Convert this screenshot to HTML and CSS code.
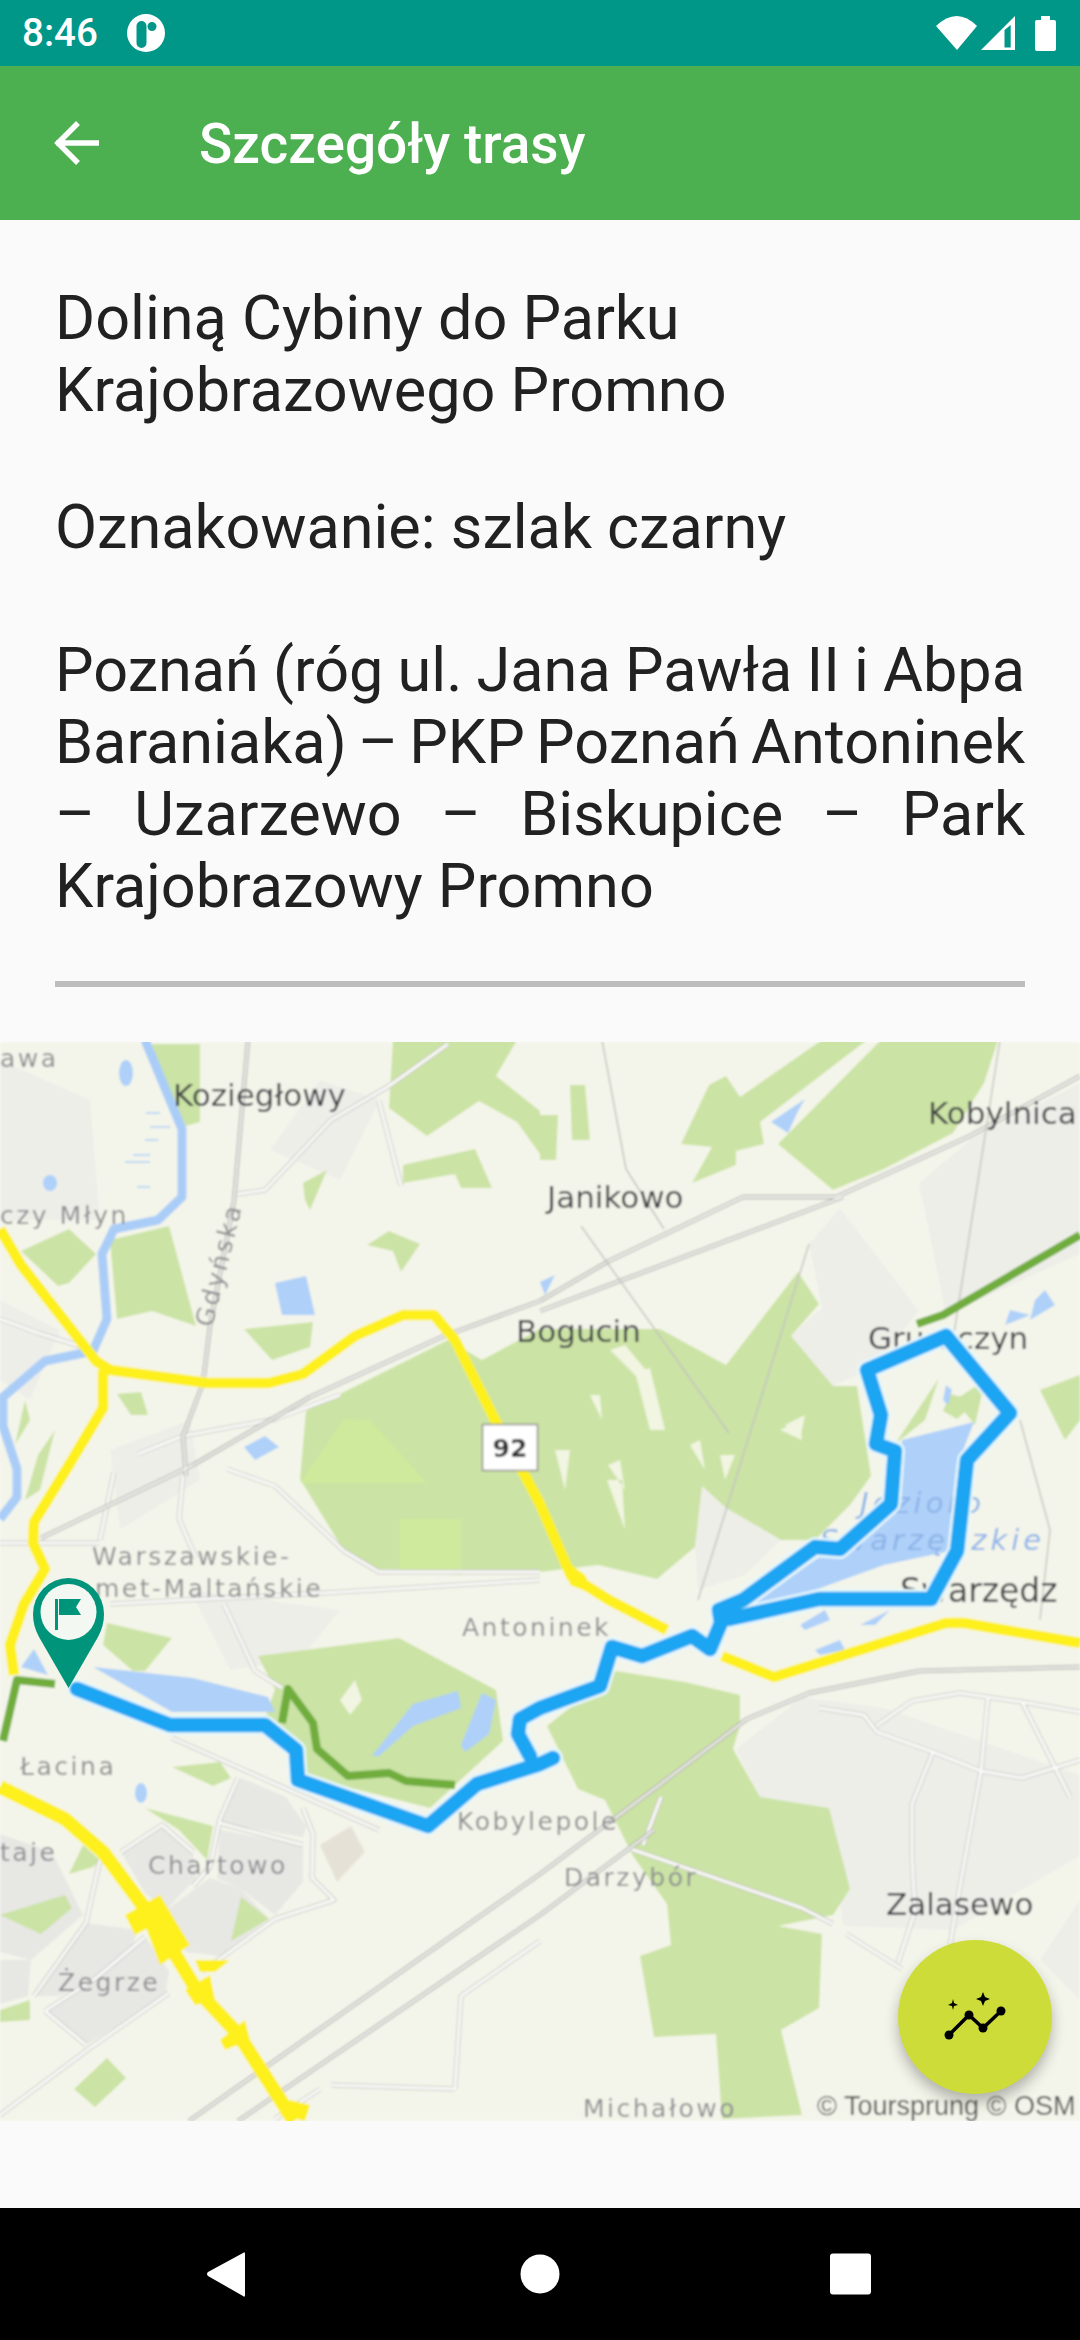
FILE: index.html
```html
<!DOCTYPE html>
<html lang="pl">
<head>
<meta charset="utf-8">
<title>Szczegóły trasy</title>
<link rel="stylesheet" href="styles.css">
</head>
<body>

<div class="statusbar">
	<span class="clock">8:46</span>
	<svg class="notif" viewBox="0 0 40 40" width="40" height="40">
		<path fill="#fff" fill-rule="evenodd" d="M20 1a19 19 0 1 0 0 38a19 19 0 1 0 0-38zM15.500 8a5 5 0 0 1 5 5v17a5 5 0 0 1-10 0v-17a5 5 0 0 1 5-5zM26 9a4.500 4.500 0 1 1 0 9a4.500 4.500 0 1 1 0-9z"/>
	</svg>
	<svg class="sysicons" viewBox="938 12 122 42" width="122" height="42">
		<path fill="#fff" d="M938 25Q959 5 979 25L959 49Z"/>
		<path fill="#fff" fill-rule="evenodd" d="M983 49L1017 15V49ZM1006.500 29V46.500H1012.700V24Z"/>
		<path fill="#fff" d="M1043 15H1052V19H1056Q1058 19 1058 21V48Q1058 50 1056 50H1039Q1037 50 1037 48V21Q1037 19 1039 19H1043Z"/>
	</svg>
</div>

<div class="appbar">
	<svg class="backarrow" viewBox="0 0 54 54" width="54" height="54">
		<path fill="none" stroke="#fff" stroke-width="5.500" d="M7 27H50M29 7L9 27L29 47"/>
	</svg>
	<div class="title">Szczegóły trasy</div>
</div>

<div class="content">
	<div class="info">
		<p class="route-name">Doliną Cybiny do Parku Krajobrazowego Promno</p>
		<p class="route-mark">Oznakowanie: szlak czarny</p>
		<p class="route-desc">
			<span class="jline tight">Poznań (róg ul. Jana Pawła II i Abpa</span>
			<span class="jline tight">Baraniaka) – PKP Poznań Antoninek</span>
			<span class="jline">– Uzarzewo – Biskupice – Park</span>
			<span class="lastline">Krajobrazowy Promno</span>
		</p>
		<div class="divider"></div>
	</div>

	<div class="map">
		<svg class="mapsvg" viewBox="0 1042 1080 1079" width="1080" height="1079">
			<defs>
				<filter id="soft" x="0" y="0" width="100%" height="100%"><feGaussianBlur stdDeviation="0.9"/></filter>
				<path id="minor" d="M224 1604L255 1671L282 1688M110 1604L324 1593L540 1580M238 1778L220 1819L210 1867L193 1886M303 1808L313 1834L312 1878L334 1900L275 1919L203 1971M169 1993L90 2048L0 2115M172 1738L379 1830M455 2089L461 1996L540 1941M331 2085L455 2089M320 2089L275 2119M220 1823L303 1845M121 1852L162 1825L193 1852M34 1996L86 1923L100 1860M145 1937L96 1978L45 2011M45 2011L86 2045M238 1194L265 1190L331 1120L389 1086L448 1044M379 1101L401 1186M0 1319L38 1333L83 1347M138 1454L183 1436L275 1419L340 1395M183 1476L179 1519L196 1558M227 1469L275 1486L344 1551L379 1572L540 1572M114 1472L100 1540M819 1708L864 1715L877 1732L933 1752L981 1771L1022 1778L1080 1760M876 1726L912 1701L960 1693L1022 1702L1080 1712M1022 1702L1070 1797M988 1697L981 1771L960 1886L950 1945M933 1752L912 1804L912 1856L915 1911L898 1963M631 1849L802 1908L833 1924M846 1934L902 1969M661 1797L643 1845M0 1543H100"/>
				<path id="rails" d="M41 1538L193 1465L310 1397L444 1336L540 1301L609 1261L743 1197L836 1197L970 1136L1080 1076M540 1311L843 1197M189 2121L540 1874L654 1789L747 1719L809 1693L919 1671L1080 1667M238 2121L540 1915L654 1830M248 1040L234 1201L210 1326L203 1383L183 1436L186 1476"/>
				<path id="track" d="M77 1689L170 1725H265L296 1750L298 1780L428 1826L477 1784L540 1764L553 1758M530 1756L518 1734L520 1719L540 1708L600 1686L612 1647L642 1656L692 1636L710 1649L721 1623L719 1610L743 1600L815 1547L840 1549L891 1504L895 1451L876 1444L881 1415L867 1370L946 1336L1010 1413L967 1460L957 1551L931 1599H819L729 1619"/>
			</defs>
			<g filter="url(#soft)">
				<rect class="land" x="0" y="1042" width="1080" height="1079"/>

				<!-- built up areas -->
				<path class="town" d="M121 1852L162 1825L193 1852L196 1878L165 1911L145 1893ZM220 1823L241 1778L286 1797L306 1826L303 1837ZM220 1830L303 1845L303 1882L275 1915L241 1889L217 1878ZM165 1911L210 1878L241 1889L269 1919L220 1956L186 1952ZM34 1996L86 1923L138 1930L131 1948L96 1978L59 1996ZM45 2011L117 1963L145 1937L169 1971L165 1997L86 2045ZM0 1834L52 1852L83 1915L31 1960L0 1952ZM0 1960L31 1960L28 1996L0 2004Z"/>
				<path class="town-light" d="M736 1749L802 1697L884 1708L1080 1775V1856L953 1930L843 1926L829 1808L760 1797ZM809 1244L840 1208L919 1311L871 1369L833 1386L791 1336L822 1308ZM919 1183L970 1140L1080 1083V1254L946 1315ZM320 1080L380 1100L340 1180L270 1150ZM0 1060L90 1100L100 1220L0 1220ZM190 1590L340 1610L300 1660L230 1670ZM1080 1900V2000L1040 1960ZM0 1300L60 1330L30 1400L0 1380ZM110 1450L190 1420L200 1480L120 1530ZM702 1486L726 1508L781 1540L745 1575L698 1590L695 1547Z"/>
				<path class="beige" d="M320 1845L351 1826L365 1852L337 1882Z"/>

				<!-- forest -->
				<path class="forest" d="M300 1479L306 1411L448 1340L482 1360L540 1329L660 1329L726 1365L798 1272L819 1304L791 1336L833 1386L857 1386L871 1476L850 1505L815 1540L781 1540L726 1508L702 1486L695 1547L657 1579L598 1565L540 1572L379 1569L344 1551Z"/>
				<path class="forest-lime" d="M344 1419L370 1420L427 1483L300 1483ZM400 1519L461 1519L461 1575L400 1570Z"/>
				<path class="forest" d="M778 1144L881 1040H998L984 1083L953 1133L884 1169L833 1190ZM681 1144L709 1085L726 1076L740 1097L822 1040H867L760 1122L764 1144L736 1151V1165L692 1183L712 1147ZM393 1040H517L496 1076L540 1111V1154L517 1122L479 1101L427 1136L389 1108ZM403 1165L475 1149L492 1188H461L455 1174L403 1183ZM303 1183L327 1170L310 1210L305 1200ZM21 1251L69 1229L96 1254L69 1283L58 1286ZM110 1240L169 1226L196 1326L152 1311L117 1319ZM244 1329L313 1322L310 1347L272 1360ZM152 1044H200V1122L186 1126L162 1083ZM367 1245L389 1231L420 1244L401 1272L393 1251ZM117 1394L141 1392L148 1415L131 1415ZM570 1085L585 1085L590 1140H572ZM540 1115H558L556 1160L540 1160ZM1040 1390L1080 1375V1420L1065 1440ZM25 1400L30 1420L15 1445ZM55 1430L40 1490L25 1500L38 1455ZM895 1444L939 1378L925 1420ZM943 1411L950 1394L977 1401L957 1419ZM919 1469L936 1447L930 1465Z"/>
				<path class="forest" d="M258 1656L399 1638L496 1690L503 1741L430 1808L300 1775L289 1745L265 1719L275 1689ZM547 1726L616 1671L685 1682L740 1695V1726L733 1749L760 1797L829 1808L850 1889L833 1915L778 1926L822 1934L819 2008L781 2030L802 2115L722 2119L716 2034L654 2037L640 1956L671 1945L667 1904L633 1856L605 1800L578 1789ZM107 1623L172 1638L145 1671L133 1671L103 1645ZM145 1808L213 1826L207 1860L179 1830ZM172 1767L220 1762L231 1778L213 1786ZM231 1941L241 1897L269 1919ZM74 2089L107 2058L126 2078L95 2107ZM69 1874L83 1845L100 1860L93 1867ZM0 1915L65 1895L72 1908L41 1934ZM0 2010L30 2000L30 2020L0 2022ZM955 1400L985 1380L975 1425Z"/>
				<path class="clearing" d="M610 1350L625 1345L650 1375L640 1380ZM635 1372L650 1368L665 1430L650 1430ZM590 1395L600 1395L602 1420ZM785 1425L805 1415L800 1440L800 1440ZM780 1430L800 1420L802 1440ZM608 1465L620 1460L625 1490ZM555 1450L565 1490L570 1450ZM607 1480L625 1530L622 1480ZM340 1700L355 1680L362 1700L350 1715ZM690 1445L700 1440L705 1470ZM720 1455L735 1455L725 1480Z"/>

				<!-- water -->
				<path class="river" d="M145 1040L182 1129V1197L158 1220L114 1229L102 1254L107 1319L93 1351L45 1361L3 1397V1426L17 1469V1497L0 1519"/>
				<path class="water-lines" d="M146 1113H160M150 1127H170M145 1140H158M133 1155H150M125 1162H150M137 1187H150"/>
				<path class="water" d="M93 1667L193 1678L268 1697L275 1712H172ZM21 1667L34 1649L48 1675ZM372 1756L413 1704L458 1691L461 1708L413 1726L379 1756ZM461 1745L482 1693L496 1700L489 1734L465 1752ZM902 1440L974 1422L960 1458L950 1551L884 1565L815 1590L788 1600L745 1610L815 1560L880 1520L895 1480ZM275 1283L306 1276L315 1315L282 1315ZM244 1447L265 1436L279 1447L255 1460ZM771 1122L805 1099L798 1111L788 1133ZM540 1282L555 1275L545 1295ZM1035 1300L1045 1290L1055 1305L1030 1320ZM1010 1310L1030 1315L1005 1325ZM800 1625L825 1610L830 1620L805 1630ZM860 1625L890 1610L875 1625ZM815 1650L840 1640L845 1650L820 1655ZM946 1385L952 1390L948 1405L943 1400Z"/>
				<ellipse class="water" cx="126" cy="1073" rx="7" ry="13"/>
				<ellipse class="water" cx="50" cy="1183" rx="7" ry="8"/>
				<ellipse class="water" cx="141" cy="1793" rx="6" ry="10"/>
				<text class="lbl-water" x="860" y="1513">Jezioro</text>
				<text class="lbl-water" x="820" y="1550">Swarzędzkie</text>

				<!-- roads -->
				<use href="#minor" class="road-case"/>
				<use href="#minor" class="road-fill"/>
				<use href="#rails" class="rail-case"/>
				<use href="#rails" class="rail-fill"/>
				<path class="road-thin" d="M602 1040L626 1169L664 1229M581 1226L729 1433M809 1244L698 1600M1000 1040L953 1340M1020 1420L1050 1530L1040 1620"/>

				<path class="major" d="M0 1229L21 1265L96 1361L110 1370L207 1383H269L303 1374L355 1336L403 1315H434L455 1340L496 1422L523 1472L540 1504L571 1576L609 1600L667 1630M722 1656L774 1677L946 1623H964L1080 1643M103 1370V1408L69 1465L34 1522L33 1543L45 1569L24 1604L10 1645L14 1675"/>
				<path class="motorway" d="M0 1787L65 1819L103 1852L158 1926L196 1989L238 2034L294 2121"/>
				<path class="motorway-blob" d="M125 1915L160 1895L172 1915L135 1935ZM145 1925L170 1912L190 1945L160 1965ZM185 1990L210 1975L215 2000L195 2005ZM220 2040L245 2020L250 2040L225 2050ZM280 2115L290 2100L310 2105L305 2121ZM195 1960L230 1960L215 1972L200 1972ZM565 1560L585 1575L595 1595L570 1585Z"/>

				<!-- trails -->
				<path class="trail" d="M3 1741L17 1680L55 1684M282 1723L288 1689L313 1723L317 1749L348 1776L389 1773L406 1781L455 1785M1080 1235L943 1315L917 1324"/>

				<!-- place names -->
				<text class="lbl-dark" x="173" y="1106">Koziegłowy</text>
				<text class="lbl-dark" x="547" y="1208">Janikowo</text>
				<text class="lbl-dark" x="928" y="1124">Kobylnica</text>
				<text class="lbl-dark" x="516" y="1342">Bogucin</text>
				<text class="lbl-dark" x="868" y="1349">Gruszczyn</text>
				<text class="lbl-dark big" x="900" y="1602">Swarzędz</text>
				<text class="lbl-dark" x="886" y="1915">Zalasewo</text>
				<text class="lbl-grey" x="0" y="1067">awa</text>
				<text class="lbl-grey" x="0" y="1224">czy Młyn</text>
				<text class="lbl-grey" transform="translate(212 1328) rotate(-76)">Gdyńska</text>
				<text class="lbl-grey" x="92" y="1565">Warszawskie-</text>
				<text class="lbl-grey" x="95" y="1597">met-Maltańskie</text>
				<text class="lbl-grey" x="462" y="1636">Antoninek</text>
				<text class="lbl-grey" x="20" y="1775">Łacina</text>
				<text class="lbl-grey" x="457" y="1830">Kobylepole</text>
				<text class="lbl-grey" x="0" y="1861">taje</text>
				<text class="lbl-grey" x="148" y="1874">Chartowo</text>
				<text class="lbl-grey" x="564" y="1886">Darzybór</text>
				<text class="lbl-grey" x="58" y="1991">Żegrze</text>
				<text class="lbl-grey" x="583" y="2117">Michałowo</text>
				<text class="lbl-copy" x="817" y="2115">© Toursprung © OSM</text>

				<!-- route -->
				<use href="#track" class="track-halo"/>
				<use href="#track" class="track-line"/>

				<!-- road sign -->
				<rect class="sign" x="482.500" y="1424.500" width="55" height="46"/>
				<text class="sign-num" x="510" y="1457">92</text>
			</g>

			<!-- start pin -->
			<path class="pin" d="M68.500 1688L39 1637Q33 1626 33 1614A35.500 36 0 0 1 104 1614Q104 1626 98 1637Z"/>
			<circle class="pin-hole" cx="68.500" cy="1612" r="28"/>
			<path class="pin" d="M55 1599H58V1630H55ZM59 1599H81L76 1607L81 1615H59Z"/>
		</svg>

		<div class="fab">
			<svg viewBox="0 0 154 154" width="154" height="154">
				<path fill="none" stroke="#000" stroke-width="3.500" d="M51 95L71 75L85 88L103 71"/>
				<circle cx="51" cy="95" r="4.500"/>
				<circle cx="71" cy="75" r="4.500"/>
				<circle cx="85" cy="88" r="4.500"/>
				<circle cx="103" cy="71" r="4.500"/>
				<path d="M85 52L87 57L92 59L87 61L85 66L83 61L78 59L83 57ZM55 59L56 63L60 65L56 66L55 70L54 66L50 65L54 63Z"/>
			</svg>
		</div>
	</div>
</div>

<div class="navbar">
	<svg viewBox="0 0 66 66" width="66" height="66"><path fill="#fff" d="M50 12Q52 10 52 13V54Q52 57 50 55L15 35Q13 33 15 31Z"/></svg>
	<svg viewBox="0 0 66 66" width="66" height="66"><circle fill="#fff" cx="35" cy="33" r="19.500"/></svg>
	<svg viewBox="0 0 66 66" width="66" height="66"><rect fill="#fff" x="13" y="12.500" width="41" height="41" rx="3"/></svg>
</div>

</body>
</html>
```

FILE: styles.css
```css
html, body{margin:0; padding:0}
body{width:1080px; height:2340px; display:flex; flex-direction:column; background:#fafafa; font-family:Roboto, sans-serif; overflow:hidden}

/* status bar */
.statusbar{height:66px; background:#009688; display:flex; align-items:center; padding:0 22px; color:#fff; flex:none}
.clock{font-size:38.500px; font-weight:500; margin-top:-1px}
.notif{margin-left:28px}
.sysicons{margin-left:auto; margin-top:1px}

/* app bar */
.appbar{height:154px; background:#4caf50; display:flex; align-items:center; flex:none}
.backarrow{margin-left:49px}
.title{margin-left:96px; font-size:55px; font-weight:500; color:#fff; margin-top:2px}

/* text part */
.content{flex:1; display:flex; flex-direction:column}
.info{padding:62px 55px 55px}
.info p{margin:0; font-size:61.200px; line-height:72px; color:#212121}
.route-mark{margin-top:65px !important}
.route-desc{margin-top:71px !important}
.jline{display:block; text-align:justify; text-align-last:justify}
.tight{word-spacing:-9px}
.lastline{display:block}
.divider{height:5.500px; background:#bdbdbd; margin-top:59px}

/* map */
.map{position:relative; height:1079px}
.mapsvg{display:block}
.land{fill:#f4f5ea}
.town{fill:#e7e7e4}
.town-light{fill:#eeeee9}
.beige{fill:#e6e1d6}
.forest{fill:#cbe3a4}
.forest-lime{fill:#cfea9c}
.clearing{fill:#f1f5e2}
.water{fill:#aed0f9}
.river{fill:none; stroke:#aacdf8; stroke-width:9; stroke-linejoin:round}
.water-lines{fill:none; stroke:#bcd8f5; stroke-width:2}
.road-case, .road-fill, .rail-case, .rail-fill, .road-thin, .major, .motorway, .trail, .track-halo, .track-line{fill:none; stroke-linejoin:round}
.road-case{stroke:#c9c9c6; stroke-width:5}
.road-fill{stroke:#fafaf8; stroke-width:3}
.rail-case{stroke:#b5b5b2; stroke-width:4.500}
.rail-fill{stroke:#f2f2ee; stroke-width:2}
.road-thin{stroke:#c4c4c0; stroke-width:1.500}
.major{stroke:#fdf01c; stroke-width:10.500}
.motorway{stroke:#fdf01c; stroke-width:14}
.motorway-blob{fill:#fdf01c}
.trail{stroke:#70ad3e; stroke-width:8}
.track-halo{stroke:#e4f7fd; stroke-width:20; stroke-linecap:round}
.track-line{stroke:#1ea5f2; stroke-width:14.500; stroke-linecap:round}
.sign{fill:#fff; stroke:#8f8f8f; stroke-width:1.500}
.sign-num{font:bold 25px "DejaVu Sans", sans-serif; text-anchor:middle; fill:#333}
.lbl-dark{font:31px "DejaVu Sans", sans-serif; fill:#3c3f44}
.big{font-size:33px}
.lbl-grey{font:25px "DejaVu Sans", sans-serif; fill:#8d8f92; letter-spacing:2.500px}
.lbl-copy{font:27px "Liberation Sans", sans-serif; fill:#555}
.lbl-water{font:italic 29px "DejaVu Sans", sans-serif; fill:#8db4e8; letter-spacing:4px}
.pin{fill:#00947a}
.pin-hole{fill:#f4f8f2}

.fab{position:absolute; right:28px; bottom:27px; width:154px; height:154px; border-radius:50%; background:#cddc39; box-shadow:0 8px 14px rgba(0,0,0,.28)}
.fab svg{display:block}

/* bottom nav */
.navbar{height:132px; background:#000; display:flex; align-items:center; justify-content:space-between; padding:0 197px 0 193px; flex:none}
```
